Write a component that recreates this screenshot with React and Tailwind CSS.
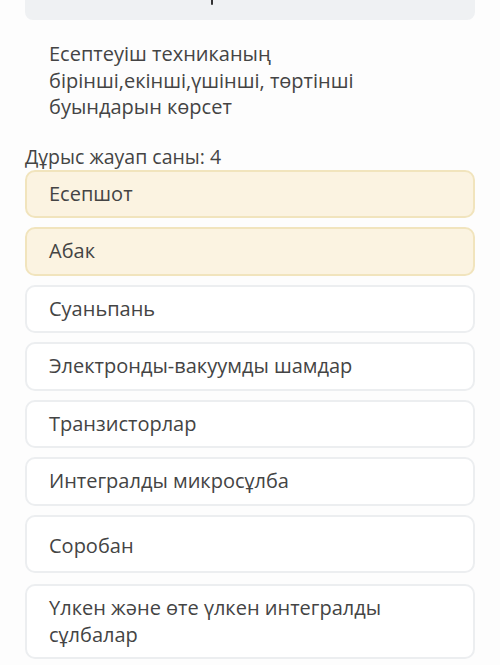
import React from "react";

const options = [
  { text: "Есепшот", selected: true },
  { text: "Абак", selected: true },
  { text: "Суаньпань" },
  { text: "Электронды-вакуумды шамдар" },
  { text: "Транзисторлар" },
  { text: "Интегралды микросұлба" },
];

export default function App() {
  return (
    <div
      className="w-[500px] h-[665px] overflow-hidden bg-[#fdfdfd] text-[#444444]"
      style={{ fontFamily: '"Open Sans", "Noto Sans", sans-serif' }}
    >
      <div className="mx-[25px] h-[20px] rounded-b-[8px] bg-[#eff1f3] flex">
        <div className="ml-[186px] w-[2px] h-[5px] bg-[#333] rounded-b-sm" />
      </div>

      <div className="pl-[49px] pr-[40px] pt-[21px] text-[20px] leading-[26.5px]">
        Есептеуіш техниканың
        <br />
        бірінші,екінші,үшінші, төртінші
        <br />
        буындарын көрсет
      </div>

      <div className="pl-[25px] mt-[23px] text-[19.5px] leading-[26px]">
        Дұрыс жауап саны: 4
      </div>

      <div className="mx-[25px] flex flex-col gap-[9px]">
        {options.map((o) => (
          <div
            key={o.text}
            className={
              "h-[48.5px] flex items-center pl-[22px] rounded-[10px] border-2 text-[20px] " +
              (o.selected
                ? "bg-[#fbf3e1] border-[#f1e4bd]"
                : "bg-white border-[#eceef0]")
            }
          >
            {o.text}
          </div>
        ))}
        <div className="h-[58px] flex items-center pl-[22px] pt-[4px] rounded-[10px] border-2 bg-white border-[#eceef0] text-[20px]">
          Соробан
        </div>
        <div className="mt-[2px] h-[75px] flex items-center pl-[22px] rounded-[10px] border-2 bg-white border-[#eceef0] text-[20px] leading-[27px]">
          <div>
            Үлкен және өте үлкен интегралды
            <br />
            сұлбалар
          </div>
        </div>
      </div>
    </div>
  );
}
